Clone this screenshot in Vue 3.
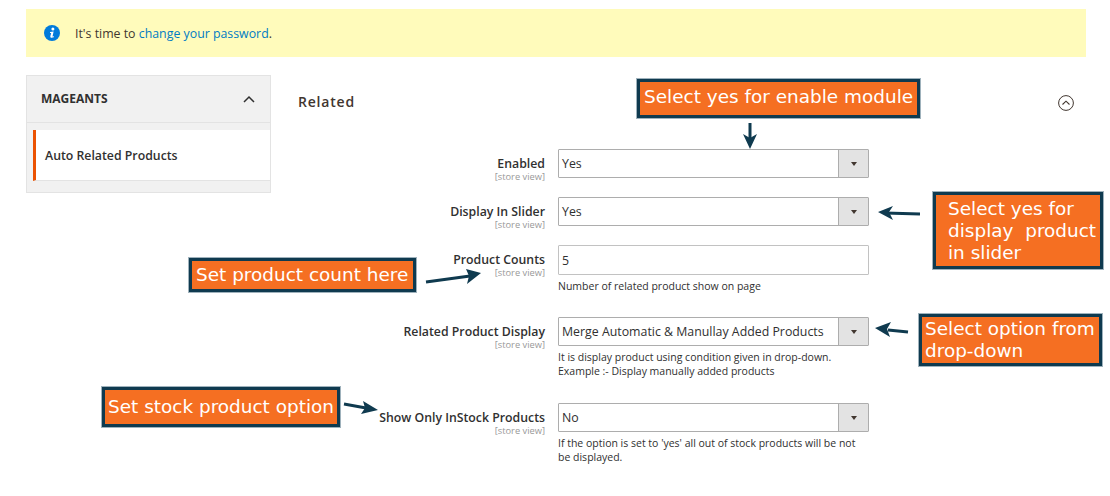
<script setup>
const rows = [
  { label: 'Enabled', type: 'select', value: 'Yes', cls: 'r1' },
  { label: 'Display In Slider', type: 'select', value: 'Yes', cls: 'r2' },
  { label: 'Product Counts', type: 'input', value: '5', cls: 'r3', note: ['Number of related product show on page'] },
  { label: 'Related Product Display', type: 'select', value: 'Merge Automatic & Manullay Added Products', cls: 'r4', note: ['It is display product using condition given in drop-down.', 'Example :- Display manually added products'] },
  { label: 'Show Only InStock Products', type: 'select', value: 'No', cls: 'r5', note: ["If the option is set to 'yes' all out of stock products will be not", 'be displayed.'] }
]
const arrows = [
  { body: 'M750 123 L750 140', head: 'M743 134 L750 149 L757 134 L750 138 Z' },
  { body: 'M920 214 L885 213', head: 'M878 212 L893 206 L889 212 L893 220 Z' },
  { body: 'M426 282 L470 276', head: 'M481 273 L466 269 L469 276 L467 284 Z' },
  { body: 'M908 332 L888 330', head: 'M875 328 L891 322 L887 329 L890 337 Z' },
  { body: 'M344 404 L366 408', head: 'M378 410 L363 401 L365 408 L361 414 Z' }
]
</script>

<template>
  <div class="page">
    <div class="notice">
      <svg class="info" width="16" height="16" viewBox="0 0 16 16">
        <circle cx="8" cy="8" r="8" fill="#007bdb" />
        <circle cx="8.9" cy="4" r="1.5" fill="#fff" />
        <path d="M6 7 L9.6 6.6 L8.5 11.4 L10 11.2 L9.8 12.3 Q8 13 6.9 12.7 Q6 12.3 6.4 11 L7.2 8 L6 7.9 Z" fill="#fff" />
      </svg>
      <span>It's time to <a class="link">change your password</a>.</span>
    </div>

    <div class="columns">
      <aside class="side">
        <div class="side-head">
          <span>MAGEANTS</span>
          <svg width="12" height="8" viewBox="0 0 12 8"><path d="M1 7 L6 2 L11 7" fill="none" stroke="#303030" stroke-width="1.5" /></svg>
        </div>
        <div class="side-body">
          <div class="side-item">Auto Related Products</div>
        </div>
      </aside>

      <main class="main">
        <div class="section-head">
          <h2>Related</h2>
          <svg width="16" height="16" viewBox="0 0 16 16">
            <circle cx="8" cy="8" r="7.4" fill="none" stroke="#41362f" stroke-width="1" />
            <path d="M4.5 9.5 L8 6.2 L11.5 9.5" fill="none" stroke="#41362f" stroke-width="1.1" />
          </svg>
        </div>
        <div v-for="row in rows" :key="row.label" class="row" :class="row.cls">
          <div class="label">
            <div class="label-text">{{ row.label }}</div>
            <div class="scope">[store view]</div>
          </div>
          <div class="control">
            <div class="field" :class="row.type">
              <span class="value">{{ row.value }}</span>
              <span v-if="row.type === 'select'" class="caret"><i></i></span>
            </div>
            <div v-if="row.note" class="note">
              <div v-for="line in row.note" :key="line">{{ line }}</div>
            </div>
          </div>
        </div>
      </main>
    </div>

    <div class="call c1">Select yes for enable module</div>
    <div class="call c2">Select yes for<br />display&nbsp; product<br />in slider</div>
    <div class="call c3">Set product count here</div>
    <div class="call c4">Select option from<br />drop-down</div>
    <div class="call c5">Set stock product option</div>

    <svg class="arrows" width="1110" height="496" viewBox="0 0 1110 496">
      <g v-for="a in arrows" :key="a.body">
        <path :d="a.body" fill="none" stroke="#0f3a4f" stroke-width="3" />
        <path :d="a.head" fill="#0f3a4f" />
      </g>
    </svg>
  </div>
</template>

<style>
html, body { margin: 0; background: #fff; }
</style>

<style scoped>
.page {
  position: relative;
  width: 1110px;
  height: 496px;
  overflow: hidden;
  box-sizing: border-box;
  padding: 9px 24px 0 26px;
  font-family: "Open Sans", "Liberation Sans", sans-serif;
  color: #303030;
  font-size: 12.5px;
}
.notice {
  height: 48px;
  background: #fffbbb;
  display: flex;
  align-items: center;
  padding-left: 18px;
  gap: 15px;
  color: #41362f;
  font-size: 12.35px;
}
.info { flex: none; }
.link { color: #007bc4; }
.columns {
  display: flex;
  margin-top: 18px;
}
.side {
  width: 245px;
  height: 118px;
  flex: none;
  box-sizing: border-box;
  background: #f1f1f1;
  border: 1px solid #e3e3e3;
}
.side-head {
  height: 47px;
  box-sizing: border-box;
  border-bottom: 1px solid #e3e3e3;
  display: flex;
  align-items: center;
  justify-content: space-between;
  padding: 0 15px 1px 14px;
  font-weight: 700;
  font-size: 12px;
  color: #303030;
}
.side-body {
  padding-top: 7px;
}
.side-item {
  margin-left: 6px;
  height: 51px;
  box-sizing: border-box;
  background: #fff;
  border-left: 3px solid #eb5202;
  border-bottom: 1px solid #e3e3e3;
  padding: 1px 0 0 9px;
  display: flex;
  align-items: center;
  font-weight: 600;
  font-size: 12.3px;
  color: #303030;
}
.main {
  flex: 1;
  padding-left: 27px;
  padding-right: 12px;
}
.section-head {
  height: 54px;
  display: flex;
  align-items: flex-start;
  justify-content: space-between;
}
.section-head h2 {
  margin: 16px 0 0;
  font-size: 14px;
  line-height: 22px;
  font-weight: 600;
  letter-spacing: 0.8px;
  color: #41362f;
}
.section-head svg { margin-top: 20px; }
.row {
  display: grid;
  grid-template-columns: 247px 311px;
  column-gap: 13px;
}
.r1 { margin-top: 20px; }
.r2 { margin-top: 15px; }
.r3 { margin-top: 15px; }
.r4 { margin-top: 24px; }
.r5 { margin-top: 25px; }
.label {
  text-align: right;
  padding-top: 7px;
}
.label-text {
  font-weight: 600;
  font-size: 12.3px;
  line-height: 15px;
  color: #303030;
  white-space: nowrap;
}
.scope {
  font-size: 9.3px;
  line-height: 11px;
  color: #999;
}
.field {
  height: 29px;
  box-sizing: border-box;
  background: #fff;
  border: 1px solid #adadad;
  border-radius: 1px;
  display: flex;
  align-items: center;
  justify-content: space-between;
  font-size: 12.35px;
  color: #303030;
}
.field.input { border-color: #c2c2c2; height: 30px; }
.value { padding-left: 3px; white-space: nowrap; }
.caret {
  width: 30px;
  height: 100%;
  flex: none;
  background: #e3e3e3;
  border-left: 1px solid #adadad;
  box-sizing: border-box;
  display: flex;
  align-items: center;
  justify-content: center;
}
.caret i {
  width: 0;
  height: 0;
  border-left: 3px solid transparent;
  border-right: 3px solid transparent;
  border-top: 4px solid #41362f;
}
.note {
  margin-top: 4px;
  font-size: 10.5px;
  line-height: 14px;
  color: #303030;
}
.call {
  position: absolute;
  box-sizing: border-box;
  background: #f56f22;
  border: 4px solid #0f3a4f;
  outline: 1px solid #9fb2bc;
  outline-offset: -1px;
  color: #fff;
  font-family: "DejaVu Sans", "Liberation Sans", sans-serif;
  font-size: 18.45px;
  line-height: 22px;
  white-space: nowrap;
}
.c1 { left: 636px; top: 78px; width: 285px; height: 41px; padding: 4px 0 0 4px; }
.c2 { left: 932px; top: 191px; width: 172px; height: 79px; padding: 3px 0 0 12px; }
.c3 { left: 188px; top: 257px; width: 229px; height: 36px; padding: 3px 0 0 4px; }
.c4 { left: 918px; top: 313px; width: 185px; height: 54px; padding: 1px 0 0 3px; }
.c5 { left: 101px; top: 386px; width: 240px; height: 42px; padding: 6px 0 0 3px; }
.arrows {
  position: absolute;
  left: 0;
  top: 0;
  pointer-events: none;
}
</style>
